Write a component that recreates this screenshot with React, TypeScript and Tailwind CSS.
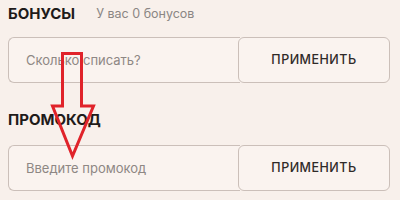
import { useState } from 'react';

const FONT = { fontFamily: 'Inter, "Open Sans", "Liberation Sans", sans-serif' };

function ApplyRow({ placeholder }: { placeholder: string }) {
  const [value, setValue] = useState('');
  return (
    <div className="flex h-[46px] w-[382px]">
      <input
        value={value}
        onChange={(e) => setValue(e.target.value)}
        placeholder={placeholder}
        className="h-full w-[232px] rounded-l-[6px] border border-r-0 border-[#cbbfb9] bg-[#faf3ef] pl-[17px] text-[13px] text-[#333] outline-none placeholder:text-[#8e8784]"
      />
      <button
        type="button"
        className="h-full w-[152px] -ml-[2px] rounded-[6px] border border-[#cbbfb9] bg-[#faf3ef] text-[12.5px] font-medium tracking-[0.04em] text-[#2f2a28]"
      >
        ПРИМЕНИТЬ
      </button>
    </div>
  );
}

export default function App() {
  return (
    <div className="relative h-[200px] w-[400px] overflow-hidden bg-[#f8f0eb]" style={FONT}>
      <div className="pl-2 pt-[4px]">
        <div className="flex h-[20px] items-center">
          <span className="text-[15px] font-bold text-[#1f1b1a]">БОНУСЫ</span>
          <span className="ml-[21px] text-[12.5px] text-[#8b8684]">У вас 0 бонусов</span>
        </div>
        <div className="mt-[13px]">
          <ApplyRow placeholder="Сколько списать?" />
        </div>
        <div className="mt-[26px] flex h-[22px] items-center">
          <span className="text-[15px] font-bold text-[#1f1b1a]">ПРОМОКОД</span>
        </div>
        <div className="mt-[14px]">
          <ApplyRow placeholder="Введите промокод" />
        </div>
      </div>

      <svg className="pointer-events-none absolute left-0 top-0" width="400" height="200" viewBox="0 0 400 200">
        <polygon
          points="62.5,53.5 81.5,53.5 81.5,106 93.5,106 72.5,156 52.5,106 62.5,106"
          fill="none"
          stroke="#e0232a"
          strokeWidth="3"
          strokeLinejoin="miter"
        />
      </svg>
    </div>
  );
}
